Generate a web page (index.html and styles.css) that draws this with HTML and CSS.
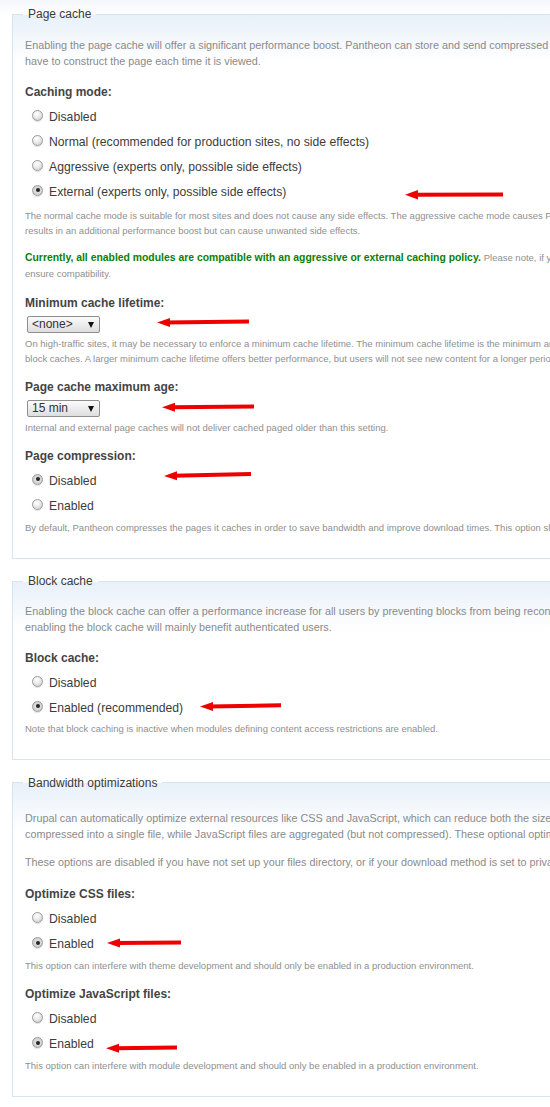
FILE: index.html
```html
<!DOCTYPE html>
<html lang="en">
<head>
<meta charset="utf-8">
<title>Performance</title>
<link rel="stylesheet" href="styles.css">
</head>
<body>
<div class="page">

  <fieldset class="fs">
    <legend>Page cache</legend>
    <p class="desc">Enabling the page cache will offer a significant performance boost. Pantheon can store and send compressed cached pages requested by anonymous users. By caching a web page, Pantheon does not<br>have to construct the page each time it is viewed.</p>

    <div class="item item-first">
      <div class="label">Caching mode:</div>
      <div class="radios">
        <div class="radio"><span class="dot"></span>Disabled</div>
        <div class="radio"><span class="dot"></span>Normal (recommended for production sites, no side effects)</div>
        <div class="radio"><span class="dot"></span>Aggressive (experts only, possible side effects)</div>
        <div class="radio"><span class="dot on"></span>External (experts only, possible side effects)</div>
      </div>
      <div class="small small-wide">The normal cache mode is suitable for most sites and does not cause any side effects. The aggressive cache mode causes Pantheon to skip the loading (boot) and unloading (exit) of enabled modules when serving a cached page. This<br>results in an additional performance boost but can cause unwanted side effects.</div>
    </div>

    <div class="note"><strong class="ok">Currently, all enabled modules are compatible with an aggressive or external caching policy.</strong> <span class="note-rest">Please note, if you use an aggressive or external caching policy, you must also check back here after enabling new modules to<br>ensure compatibility.</span></div>

    <div class="item">
      <div class="label">Minimum cache lifetime:</div>
      <div class="select"><span class="sel-text">&lt;none&gt;</span><span class="caret"></span></div>
      <div class="small sel-desc">On high-traffic sites, it may be necessary to enforce a minimum cache lifetime. The minimum cache lifetime is the minimum amount of time that will elapse before the cache is emptied and recreated, and is applied to both page and<br>block caches. A larger minimum cache lifetime offers better performance, but users will not see new content for a longer period of time.</div>
    </div>

    <div class="item">
      <div class="label">Page cache maximum age:</div>
      <div class="select"><span class="sel-text">15 min</span><span class="caret"></span></div>
      <div class="small sel-desc">Internal and external page caches will not deliver cached paged older than this setting.</div>
    </div>

    <div class="item">
      <div class="label">Page compression:</div>
      <div class="radios">
        <div class="radio"><span class="dot on"></span>Disabled</div>
        <div class="radio"><span class="dot"></span>Enabled</div>
      </div>
      <div class="small">By default, Pantheon compresses the pages it caches in order to save bandwidth and improve download times. This option should be disabled when using a webserver that performs compression.</div>
    </div>
  </fieldset>

  <fieldset class="fs fs-block">
    <legend>Block cache</legend>
    <p class="desc desc-b">Enabling the block cache can offer a performance increase for all users by preventing blocks from being reconstructed on each page load. If the page cache is also enabled, performance increases from<br>enabling the block cache will mainly benefit authenticated users.</p>

    <div class="item item-first">
      <div class="label">Block cache:</div>
      <div class="radios">
        <div class="radio"><span class="dot"></span>Disabled</div>
        <div class="radio"><span class="dot on"></span>Enabled (recommended)</div>
      </div>
      <div class="small small-tight">Note that block caching is inactive when modules defining content access restrictions are enabled.</div>
    </div>
  </fieldset>

  <fieldset class="fs fs-bw">
    <legend>Bandwidth optimizations</legend>
    <p class="desc desc-c">Drupal can automatically optimize external resources like CSS and JavaScript, which can reduce both the size and number of requests made to your website. CSS files can be aggregated and<br>compressed into a single file, while JavaScript files are aggregated (but not compressed). These optional optimizations may reduce server load, bandwidth requirements, and page loading times.</p>
    <p class="desc desc-next">These options are disabled if you have not set up your files directory, or if your download method is set to private.</p>

    <div class="item item-css">
      <div class="label">Optimize CSS files:</div>
      <div class="radios">
        <div class="radio"><span class="dot"></span>Disabled</div>
        <div class="radio"><span class="dot on"></span>Enabled</div>
      </div>
      <div class="small">This option can interfere with theme development and should only be enabled in a production environment.</div>
    </div>

    <div class="item">
      <div class="label">Optimize JavaScript files:</div>
      <div class="radios">
        <div class="radio"><span class="dot"></span>Disabled</div>
        <div class="radio"><span class="dot on"></span>Enabled</div>
      </div>
      <div class="small">This option can interfere with module development and should only be enabled in a production environment.</div>
    </div>
  </fieldset>

  <svg class="arrows" width="550" height="1107" viewBox="0 0 550 1107" aria-hidden="true">
    <g fill="#ee0000" stroke="#ee0000" stroke-linecap="butt">
      <line x1="414" y1="194.7" x2="503" y2="194.5" stroke-width="4"/>
      <polygon points="405,194.7 418,190 418,199.4" stroke="none"/>

      <line x1="166" y1="322.5" x2="249" y2="321.5" stroke-width="4"/>
      <polygon points="157,322.5 170,318 170,327" stroke="none"/>

      <line x1="171" y1="407.3" x2="254" y2="406.5" stroke-width="4"/>
      <polygon points="162,407.3 175,402.8 175,411.8" stroke="none"/>

      <line x1="173" y1="475.8" x2="251" y2="474" stroke-width="4"/>
      <polygon points="164,476 177,471.3 177,480.3" stroke="none"/>

      <line x1="209" y1="706.4" x2="281" y2="705.3" stroke-width="4"/>
      <polygon points="200,706.6 213,702 213,711" stroke="none"/>

      <line x1="116" y1="943" x2="181" y2="942.6" stroke-width="4"/>
      <polygon points="107,943 120,938.5 120,947.5" stroke="none"/>

      <line x1="115" y1="1048.2" x2="177" y2="1047.6" stroke-width="4"/>
      <polygon points="106,1048.3 119,1043.8 119,1052.8" stroke="none"/>
    </g>
  </svg>
</div>
</body>
</html>
```

FILE: styles.css
```css
html, body {
  margin: 0;
  padding: 0;
  background: #fff;
}

body {
  font-family: "Liberation Sans", Arial, Helvetica, sans-serif;
  color: #444;
  overflow: hidden;
}

.page {
  position: relative;
  width: 550px;
  height: 1107px;
  overflow: hidden;
  box-sizing: border-box;
  padding: 7px 0 0 12px;
  background: linear-gradient(#f4f7fb, #ffffff 16px);
}

.fs {
  margin: 0 0 15px 0;
  padding: 0 12px 23px 12px;
  width: 1000px;
  border: 1px solid #d7e5f2;
  background: linear-gradient(#e8f0f9, #ffffff 48px);
  min-width: 0;
}

.fs-block { margin-bottom: 16px; }

.fs legend {
  margin-left: -2px;
  padding: 0 5px;
  font-size: 12px;
  line-height: 14px;
  color: #3a3a3a;
}

.desc {
  margin: 16px 0 0;
  font-size: 10.8px;
  line-height: 16px;
  color: #8a8a8a;
  white-space: nowrap;
}

.desc-b { margin-top: 15px; }
.desc-c { margin-top: 20px; }
.desc-next { margin-top: 12px; }

.item {
  margin-top: 13px;
}

.item-first { margin-top: 15px; }
.item-css { margin-top: 16px; }

.label {
  font-size: 12px;
  font-weight: bold;
  line-height: 16px;
  color: #444;
}

.radios {
  margin-top: 4px;
}

.fs-bw .radios {
  margin-top: 5px;
}

.fs-bw .small {
  margin-top: 1px;
}

.radio {
  display: flex;
  align-items: center;
  height: 25px;
  padding-left: 8px;
  font-size: 12.2px;
  color: #3c3c3c;
  white-space: nowrap;
}

.dot {
  position: relative;
  width: 11px;
  height: 11px;
  box-sizing: border-box;
  margin: -3px 6px 0 -1px;
  border: 1px solid #9c9c9c;
  border-radius: 50%;
  background: radial-gradient(circle at 40% 30%, #ffffff 0%, #f0f0f0 35%, #c8c8c8 100%);
  box-shadow: 0 1px 1px rgba(0, 0, 0, 0.12);
  flex: none;
}

.dot.on {
  background: radial-gradient(circle at 50% 50%, #e6e6e6 0%, #d4d4d4 60%, #bcbcbc 100%);
}

.dot.on::after {
  content: "";
  position: absolute;
  left: 2.5px;
  top: 2.5px;
  width: 4px;
  height: 4px;
  border-radius: 50%;
  background: #262626;
}

.small {
  margin-top: 2px;
  font-size: 9.5px;
  line-height: 15px;
  color: #8f8f8f;
  white-space: nowrap;
}

.small-wide { margin-top: 4px; }
.small-tight { margin-top: 0.5px; }

.sel-desc { margin-top: 3px; }

.note {
  margin-top: 12px;
  font-size: 10.4px;
  line-height: 16px;
  white-space: nowrap;
}

.ok {
  font-size: 10.4px;
  font-weight: bold;
  color: #0a800a;
}

.note-rest {
  font-size: 9.5px;
  color: #8f8f8f;
}

.select {
  display: flex;
  align-items: center;
  justify-content: space-between;
  box-sizing: border-box;
  width: 73px;
  height: 17px;
  margin: 5px 0 0 2px;
  padding: 0 5px 0 4px;
  border: 1px solid #8e8e8e;
  border-radius: 2px;
  background: linear-gradient(#fbfbfb, #dedede);
  font-size: 12px;
  color: #333;
}

.sel-text {
  line-height: 15px;
}

.caret {
  width: 0;
  height: 0;
  border-left: 3.5px solid transparent;
  border-right: 3.5px solid transparent;
  border-top: 6px solid #111;
}

.arrows {
  position: absolute;
  left: 0;
  top: 0;
  pointer-events: none;
}
```
